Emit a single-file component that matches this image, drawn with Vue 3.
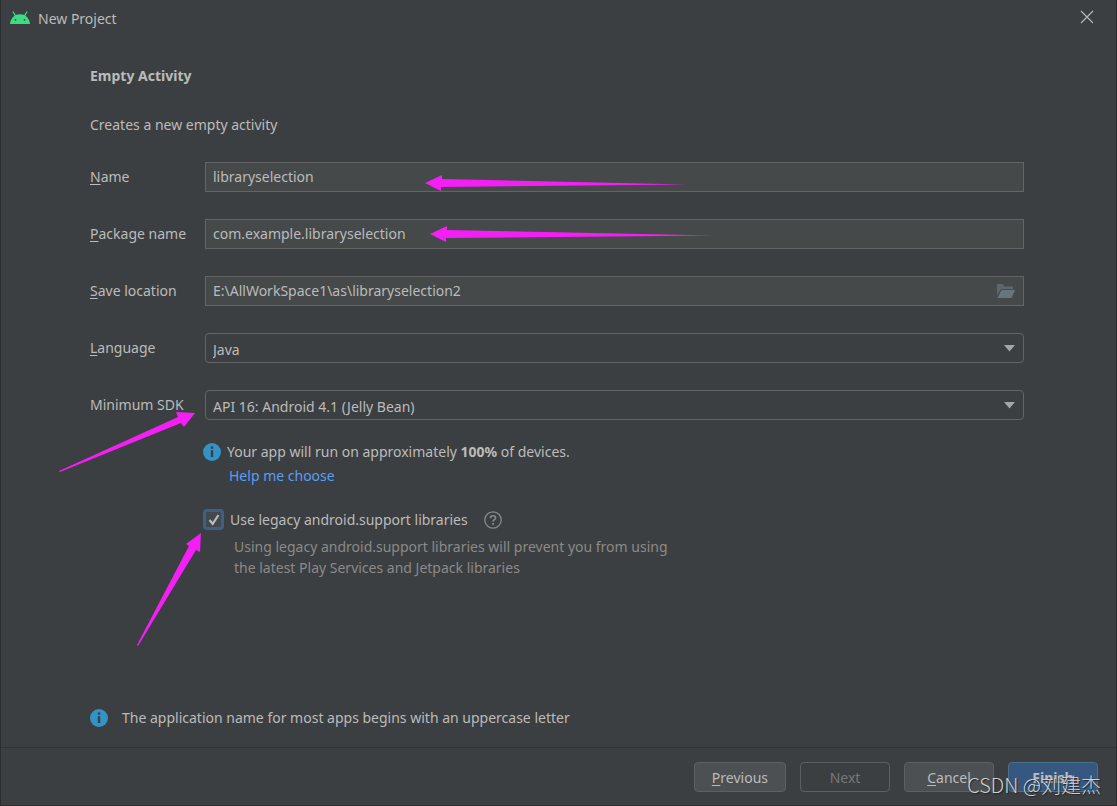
<script setup>
import { ref } from 'vue'

const name = ref('libraryselection')
const packageName = ref('com.example.libraryselection')
const location = ref('E:\\AllWorkSpace1\\as\\libraryselection2')
const language = ref('Java')
const sdk = ref('API 16: Android 4.1 (Jelly Bean)')
const legacy = ref(true)
</script>

<template>
  <div class="dialog">
    <header class="titlebar">
      <svg class="logo" width="20" height="14" viewBox="0 0 20 14" aria-hidden="true">
        <path d="M0 13C.3 8.300 3.600 3.200 10 3.200S19.700 8.300 20 13z" fill="#3ddc84" />
        <path d="M3.200 1l2 3.400M16.800 1l-2 3.400" stroke="#3ddc84" stroke-width="1.200" stroke-linecap="round" />
        <circle cx="5.500" cy="8.800" r=".9" fill="#3c3f41" />
        <circle cx="14.500" cy="8.800" r=".9" fill="#3c3f41" />
      </svg>
      <span class="title">New Project</span>
      <button class="close" type="button" aria-label="Close">
        <svg width="14" height="14" viewBox="0 0 14 14"><path d="M1 1l12 12M13 1L1 13" stroke="#b4b6b7" stroke-width="1.200" /></svg>
      </button>
    </header>

    <main class="content">
      <h1>Empty Activity</h1>
      <p class="intro">Creates a new empty activity</p>

      <div class="form">
        <label for="name"><u>N</u>ame</label>
        <input id="name" v-model="name" class="field" type="text" />

        <label for="package"><u>P</u>ackage name</label>
        <input id="package" v-model="packageName" class="field" type="text" />

        <label for="location"><u>S</u>ave location</label>
        <div class="field browse">
          <input id="location" v-model="location" type="text" />
          <button type="button" aria-label="Browse">
            <svg width="20" height="16" viewBox="0 0 20 16"><path d="M1 1h5.500l2 2.500H17V6H5L1 12.500z" fill="#5f676b" /><path d="M5.500 7H19l-3.500 8H1.500z" fill="#68757b" /></svg>
          </button>
        </div>

        <label for="language"><u>L</u>anguage</label>
        <div class="combo">
          <select id="language" v-model="language"><option>Java</option></select>
          <svg width="12" height="7" viewBox="0 0 12 7"><path d="M0 0h11L5.500 6.500z" fill="#a3a6a8" /></svg>
        </div>

        <label for="sdk">Minimum SDK</label>
        <div class="combo">
          <select id="sdk" v-model="sdk"><option>API 16: Android 4.1 (Jelly Bean)</option></select>
          <svg width="12" height="7" viewBox="0 0 12 7"><path d="M0 0h11L5.500 6.500z" fill="#a3a6a8" /></svg>
        </div>
      </div>

      <section class="details">
        <p class="note">
          <svg width="18" height="18" viewBox="0 0 18 18"><circle cx="9" cy="9" r="9" fill="#3592c4" /><path d="M7.800 3.500h2.400v2.200H7.800zM7.800 7.200h2.400v6.800H7.800z" fill="#2f434e" /></svg>
          <span>Your app will run on approximately <b>100%</b> of devices.</span>
        </p>
        <a class="help" href="#">Help me choose</a>
        <div class="legacy">
          <span class="tick">
            <input id="legacy" v-model="legacy" type="checkbox" />
            <svg v-if="legacy" width="12" height="12" viewBox="0 0 12 12"><path d="M1.500 6l3.200 3.800L10.500 1" fill="none" stroke="#b9bbbc" stroke-width="2.200" /></svg>
          </span>
          <label for="legacy">Use legacy android.support libraries</label>
          <button type="button" aria-label="About legacy libraries">
            <svg width="18" height="18" viewBox="0 0 18 18" fill="none"><circle cx="9" cy="9" r="8.200" stroke="#858a8e" stroke-width="1.300" /><path d="M6.400 7.200C6.400 5.500 7.500 4.700 9 4.700s2.600.8 2.600 2.200C11.600 8.700 9 8.700 9 10.800" stroke="#858a8e" stroke-width="1.600" /><path d="M8.100 12h1.800v1.800H8.100z" fill="#858a8e" /></svg>
          </button>
        </div>
        <p class="hint">Using legacy android.support libraries will prevent you from using<br />the latest Play Services and Jetpack libraries</p>
      </section>

      <p class="note advice">
        <svg width="18" height="18" viewBox="0 0 18 18"><circle cx="9" cy="9" r="9" fill="#3592c4" /><path d="M7.800 3.500h2.400v2.200H7.800zM7.800 7.200h2.400v6.800H7.800z" fill="#2f434e" /></svg>
        <span>The application name for most apps begins with an uppercase letter</span>
      </p>
    </main>

    <footer class="actions">
      <button type="button"><u>P</u>revious</button>
      <button type="button" disabled>Next</button>
      <button type="button"><u>C</u>ancel</button>
      <button type="button" class="primary"><u>F</u>inish</button>
    </footer>

    <svg class="arrows" width="720" height="650" viewBox="0 0 720 650" fill="#f41ff4" aria-hidden="true">
      <path d="M425 183L442 175V179L686 184.500L441 187V191z" />
      <path d="M430 234L447 226V230L714 235.500L446 238V242z" />
      <path d="M195 413L176 412L178 417L59 471L60 472L181 423L184 427z" />
      <path d="M201 533L186 544L189 546L137 645L138 646L196 550L200 552z" />
    </svg>
    <span class="watermark">CSDN @刘建杰</span>
  </div>
</template>

<style>
body {
  margin: 0;
  background: #3c3f41;
}
</style>

<style scoped>
.dialog {
  position: relative;
  box-sizing: border-box;
  display: flex;
  flex-direction: column;
  min-height: 100vh;
  border: 1px solid #2b2d2e;
  border-top: 0;
  background: #3c3f41;
  color: #bbbbbb;
  font: 14px/20px "Noto Sans", "Open Sans", sans-serif;
}
h1, p {
  margin: 0;
  font-size: 14px;
}
button, input, select {
  margin: 0;
  padding: 0;
  border: 0;
  background: none;
  color: inherit;
  font: inherit;
}
svg {
  display: block;
  flex: none;
}
u {
  text-decoration-thickness: 1px;
  text-underline-offset: 2px;
}
.titlebar {
  display: flex;
  align-items: center;
  height: 36px;
  padding: 0 22px 0 9px;
}
.title {
  margin-left: 8px;
  padding-top: 2px;
}
.close {
  margin-left: auto;
  padding-bottom: 2px;
}
.content {
  flex: 1;
  display: flex;
  flex-direction: column;
  padding: 30px 92px 19px 89px;
}
.intro {
  margin-top: 29px;
}
.form {
  display: grid;
  grid-template-columns: 115px 1fr;
  grid-auto-rows: 30px;
  row-gap: 27px;
  align-items: center;
  margin-top: 27px;
}
.field {
  box-sizing: border-box;
  width: 100%;
  height: 30px;
  padding: 0 7px 2px;
  border: 1px solid #646464;
  background: #45494a;
}
.browse {
  display: flex;
  align-items: center;
  padding-bottom: 0;
}
.browse input {
  flex: 1;
  min-width: 0;
}
.combo {
  display: grid;
  align-items: center;
}
.combo select {
  grid-area: 1 / 1;
  box-sizing: border-box;
  width: 100%;
  height: 30px;
  padding: 3px 7px 0;
  appearance: none;
  border: 1px solid #646464;
  border-radius: 4px;
}
.combo svg {
  grid-area: 1 / 1;
  justify-self: end;
  margin-right: 8px;
  pointer-events: none;
}
option {
  background: #3c3f41;
}
.details {
  margin: 22px 0 0 113px;
}
.note {
  display: flex;
  align-items: center;
  gap: 6px;
}
.help {
  display: inline-block;
  margin: 4px 0 0 26px;
  color: #589df6;
  text-decoration: none;
}
.legacy {
  display: flex;
  align-items: center;
  margin-top: 23px;
}
.tick {
  display: grid;
  place-items: center;
  margin-right: 6px;
}
.tick input {
  grid-area: 1 / 1;
  box-sizing: border-box;
  width: 21px;
  height: 21px;
  appearance: none;
  border: 3px solid #3d6185;
  border-radius: 4px;
  background: #43494a;
}
.tick svg {
  grid-area: 1 / 1;
  pointer-events: none;
}
.legacy button {
  margin-left: 16px;
}
.hint {
  margin: 6px 0 0 31px;
  color: #8a8a8a;
  line-height: 21px;
}
.advice {
  gap: 14px;
  margin-top: auto;
}
.actions {
  display: flex;
  justify-content: flex-end;
  gap: 14px;
  padding: 14px 18px 13px;
  border-top: 1px solid #313435;
}
.actions button {
  box-sizing: border-box;
  min-width: 90px;
  height: 30px;
  padding: 2px 17px 0;
  border: 1px solid #5e6060;
  border-radius: 4px;
  background: #4c5052;
}
.actions button:disabled {
  background: none;
  color: #777777;
}
.actions .primary {
  border-color: #4c708c;
  background: #365880;
  font-weight: 700;
}
.arrows {
  position: absolute;
  top: 0;
  left: -1px;
  pointer-events: none;
}
.watermark {
  position: absolute;
  right: 15px;
  bottom: 7px;
  color: #d0d1d2;
  font: 20px/26px "Noto Sans CJK SC", sans-serif;
  font-weight: 300;
  text-shadow: 1px 1px 1px #222222;
  pointer-events: none;
}
</style>
